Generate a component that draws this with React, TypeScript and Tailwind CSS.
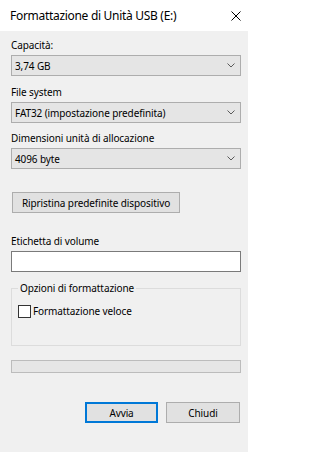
import React from 'react'

const font = "font-['Noto_Sans',sans-serif]"

function Chevron() {
  return (
    <svg width="8" height="5" viewBox="0 0 8 5" className="shrink-0">
      <path d="M0.5 0.5 L4 4 L7.5 0.5" fill="none" stroke="#5a5a5a" strokeWidth="1" />
    </svg>
  )
}

function Select({ value }: { value: string }) {
  return (
    <div className="h-[21px] flex items-center justify-between bg-[#e5e5e5] border border-[#adadad] pl-[3px] pr-[5px]">
      <span className="leading-[16px] whitespace-nowrap">{value}</span>
      <Chevron />
    </div>
  )
}

function Label({ text }: { text: string }) {
  return <div className="h-[16px] leading-[16px] mb-[2px] whitespace-nowrap">{text}</div>
}

export default function App() {
  return (
    <div className={`w-[248px] h-[452px] bg-[#f0f0f0] text-[10px] tracking-[-0.1px] text-black ${font}`}>
      {/* title bar */}
      <div className="h-[31px] bg-white flex items-center justify-between pl-[10px] pr-[7px]">
        <span className="text-[12px] tracking-[-0.3px] leading-[16px] whitespace-nowrap">Formattazione di Unità USB (E:)</span>
        <svg width="10" height="10" viewBox="0 0 10 10">
          <path d="M0.5 0.5 L9.5 9.5 M9.5 0.5 L0.5 9.5" stroke="#000" strokeWidth="1" />
        </svg>
      </div>

      <div className="pl-[11px] pr-[7px] pt-[6px]">
        <Label text="Capacità:" />
        <Select value="3,74 GB" />

        <div className="mt-[8px]">
          <Label text="File system" />
          <Select value="FAT32 (impostazione predefinita)" />
        </div>

        <div className="mt-[7px]">
          <Label text="Dimensioni unità di allocazione" />
          <Select value="4096 byte" />
        </div>

        <button className="mt-[23px] ml-[1px] w-[168px] h-[21px] bg-[#e1e1e1] border border-[#adadad] flex items-center justify-center leading-[16px] whitespace-nowrap">
          Ripristina predefinite dispositivo
        </button>

        <div className="mt-[20px]">
          <Label text="Etichetta di volume" />
          <div className="h-[21px] bg-white border border-[#7a7a7a]" />
        </div>

        <fieldset className="mt-[8px] h-[66px] border border-[#dcdcdc]">
          <legend className="ml-[6px] px-[2px] leading-[16px] whitespace-nowrap">Opzioni di formattazione</legend>
          <label className="mt-[7px] ml-[6px] flex items-center gap-[2px] h-[16px]">
            <span className="w-[13px] h-[13px] border border-[#333333] bg-white" />
            <span className="leading-[16px] whitespace-nowrap">Formattazione veloce</span>
          </label>
        </fieldset>

        <div className="mt-[14px] h-[13px] bg-[#e6e6e6] border border-[#bcbcbc]" />

        <div className="mt-[29px] flex justify-end gap-[8px] mr-[1px]">
          <button className="w-[73px] h-[21px] bg-[#e1e1e1] border-2 border-[#0078d7] flex items-center justify-center leading-[16px]">
            Avvia
          </button>
          <button className="w-[74px] h-[21px] bg-[#e1e1e1] border border-[#adadad] flex items-center justify-center leading-[16px]">
            Chiudi
          </button>
        </div>
      </div>
    </div>
  )
}
